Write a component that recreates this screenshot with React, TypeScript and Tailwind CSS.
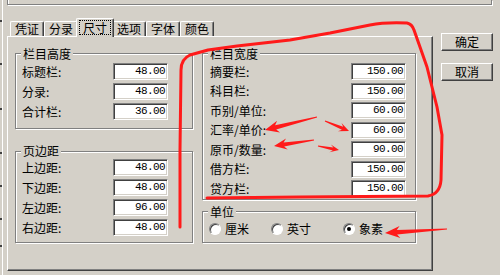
import React from "react";

const BG = "bg-[#d4d0c8]";

function arrowPoints(tx: number, ty: number, sx: number, sy: number, hl: number, hw: number, sw: number) {
  const dx = sx - tx;
  const dy = sy - ty;
  const len = Math.hypot(dx, dy);
  const ux = dx / len;
  const uy = dy / len;
  const px = -uy;
  const py = ux;
  const bx = tx + ux * hl;
  const by = ty + uy * hl;
  const nx = tx + ux * (hl - 3);
  const ny = ty + uy * (hl - 3);
  const pts = [
    [tx, ty],
    [bx + px * hw, by + py * hw],
    [nx + px * sw, ny + py * sw],
    [sx + px * 0.6, sy + py * 0.6],
    [sx - px * 0.6, sy - py * 0.6],
    [nx - px * sw, ny - py * sw],
    [bx - px * hw, by - py * hw],
  ];
  return pts.map(p => `${p[0].toFixed(1)},${p[1].toFixed(1)}`).join(" ");
}

function Group({
  title,
  className,
  titleTop = "-mt-[6px]",
  children,
}: {
  title: string;
  className: string;
  titleTop?: string;
  children?: React.ReactNode;
}) {
  return (
    <div className={`border border-[#808080] shadow-[inset_1px_1px_0_#fff,1px_1px_0_#fff] ${className}`}>
      <div className={`${titleTop} ml-[5px] px-[2px] w-fit h-[12px] leading-[12px] ${BG}`}>{title}</div>
      {children}
    </div>
  );
}

function Field({ label, value, lw }: { label: string; value: string; lw: string }) {
  return (
    <div className="flex items-center h-[17px]">
      <span className={`${lw} h-[12px] leading-[12px]`}>{label}</span>
      <div className="w-[55px] h-[17px] bg-white border border-t-[#808080] border-l-[#808080] border-r-white border-b-white shadow-[inset_1px_1px_0_#404040,inset_-1px_-1px_0_#d4d0c8] flex items-center justify-end pr-[2px] font-['Liberation_Mono',monospace] text-[11px] tracking-[-0.6px] leading-none">
        {value}
      </div>
    </div>
  );
}

function Radio({ label, checked, className }: { label: string; checked?: boolean; className: string }) {
  return (
    <div className={`flex items-center ${className}`}>
      <div className="w-[12px] h-[12px] rounded-full bg-white border border-t-[#808080] border-l-[#808080] border-r-white border-b-white shadow-[inset_1px_1px_0_#404040] flex items-center justify-center">
        {checked && <div className="w-[4px] h-[4px] rounded-full bg-black" />}
      </div>
      <span className="ml-[4px] leading-[12px]">{label}</span>
    </div>
  );
}

function Button({ label }: { label: string }) {
  return (
    <div className={`w-[52px] h-[18px] ${BG} border border-t-white border-l-white border-r-[#404040] border-b-[#404040] shadow-[inset_-1px_-1px_0_#808080] flex items-center justify-center leading-none`}>
      {label}
    </div>
  );
}

const tabs = ["凭证", "分录", "尺寸", "选项", "字体", "颜色"];
const ticks = ["mt-[20px]", "mt-[41px]", "mt-[43px]", "mt-[42px]", "mt-[31px]", "mt-[31px]", "mt-[25px]"];

export default function App() {
  return (
    <div className={`relative w-[500px] h-[275px] overflow-hidden flex ${BG} text-black text-[12px] font-['Noto_Sans_CJK_SC',sans-serif]`}>
      {/* cut-off control on the left edge */}
      <div className="w-[3px] h-full border-r border-white flex flex-col">
        {ticks.map((t, i) => (
          <div key={i} className={`${t} w-[2px] h-[2px] bg-[#404040]`} />
        ))}
      </div>

      <div className="pl-[4px] flex flex-col">
        {/* bottom of the frame above */}
        <div className="w-[485px] h-[5px] border-x border-b border-[#808080] shadow-[inset_1px_0_0_#fff,1px_1px_0_#fff]" />

        <div className="mt-[13px] flex">
          {/* tab control */}
          <div className="w-[426px] flex flex-col">
            <div className="h-[18px] flex items-end pl-[3px]">
              {tabs.map(t =>
                t === "尺寸" ? (
                  <div
                    key={t}
                    className={`relative z-10 w-[38px] h-[19px] -mx-[2px] -mb-[1px] ${BG} border-t border-l border-white border-r border-r-[#404040] shadow-[inset_-1px_0_0_#808080] rounded-t-[2px] flex items-start justify-center pt-[1px]`}
                  >
                    <span className="border border-dotted border-black px-[3px] h-[15px] leading-[13px]">{t}</span>
                  </div>
                ) : (
                  <div
                    key={t}
                    className={`w-[34px] h-[15px] ${BG} border-t border-l border-white border-r border-r-[#404040] shadow-[inset_-1px_0_0_#808080] rounded-t-[2px] flex items-center justify-center leading-none`}
                  >
                    {t}
                  </div>
                )
              )}
            </div>

            <div className="h-[235px] border border-t-white border-l-white border-r-[#404040] border-b-[#404040] shadow-[inset_-1px_-1px_0_#808080] flex pl-[7px] pt-[16px]">
              <div className="flex flex-col w-[178px]">
                <Group title="栏目高度" className="h-[76px]">
                  <div className="mt-[3px] pl-[6px] flex flex-col gap-[3px]">
                    <Field label="标题栏:" value="48.00" lw="w-[91px]" />
                    <Field label="分录:" value="48.00" lw="w-[91px]" />
                    <Field label="合计栏:" value="36.00" lw="w-[91px]" />
                  </div>
                </Group>
                <Group title="页边距" titleTop="-mt-[7px]" className="mt-[22px] h-[92px]">
                  <div className="mt-[2px] pl-[6px] flex flex-col gap-[3px]">
                    <Field label="上边距:" value="48.00" lw="w-[91px]" />
                    <Field label="下边距:" value="48.00" lw="w-[91px]" />
                    <Field label="左边距:" value="96.00" lw="w-[91px]" />
                    <Field label="右边距:" value="48.00" lw="w-[91px]" />
                  </div>
                </Group>
              </div>

              <div className="ml-[9px] flex flex-col w-[214px]">
                <Group title="栏目宽度" className="h-[147px]">
                  <div className="mt-[3px] pl-[7px] flex flex-col gap-[2.5px]">
                    <Field label="摘要栏:" value="150.00" lw="w-[141px]" />
                    <Field label="科目栏:" value="150.00" lw="w-[141px]" />
                    <Field label="币别/单位:" value="60.00" lw="w-[141px]" />
                    <Field label="汇率/单价:" value="60.00" lw="w-[141px]" />
                    <Field label="原币/数量:" value="90.00" lw="w-[141px]" />
                    <Field label="借方栏:" value="150.00" lw="w-[141px]" />
                    <Field label="贷方栏:" value="150.00" lw="w-[141px]" />
                  </div>
                </Group>
                <Group title="单位" className="mt-[11px] h-[32px]">
                  <div className="mt-[4px] pl-[6px] flex h-[13px]">
                    <Radio label="厘米" className="w-[62px]" />
                    <Radio label="英寸" className="w-[72px]" />
                    <Radio label="象素" checked className="w-[60px]" />
                  </div>
                </Group>
              </div>
            </div>
          </div>

          {/* dialog buttons */}
          <div className="ml-[8px] pt-[15px] flex flex-col gap-[12px]">
            <Button label="确定" />
            <Button label="取消" />
          </div>
        </div>
      </div>

      {/* red hand-drawn annotations on top of the screenshot */}
      <svg className="absolute inset-0 pointer-events-none" width="500" height="275" viewBox="0 0 500 275">
        <path
          d="M180,227 L180,150 L181,70 Q181,59 190,55 L208,50 L237,46 L290,40 L330,33 L370,25 Q385,22 407,23 Q412,24 414,30 L420,47 L427,67 L437,107 L442,135 L441,180 Q440,194 428,196 L300,197 L207,198"
          fill="none"
          stroke="#ff1a1a"
          strokeWidth="3"
          strokeLinecap="round"
          strokeLinejoin="round"
        />
        <g fill="#ff1a1a">
          <polygon points={arrowPoints(265, 130, 317, 117, 14, 6, 2.2)} />
          <polygon points={arrowPoints(349, 131, 325, 121, 10, 4.5, 1.6)} />
          <polygon points={arrowPoints(274, 146, 314, 140, 13, 5.5, 2)} />
          <polygon points={arrowPoints(339, 150, 318, 146, 9, 4, 1.5)} />
          <polygon points={arrowPoints(385, 233, 447, 229, 15, 6, 2.2)} />
        </g>
      </svg>
    </div>
  );
}
